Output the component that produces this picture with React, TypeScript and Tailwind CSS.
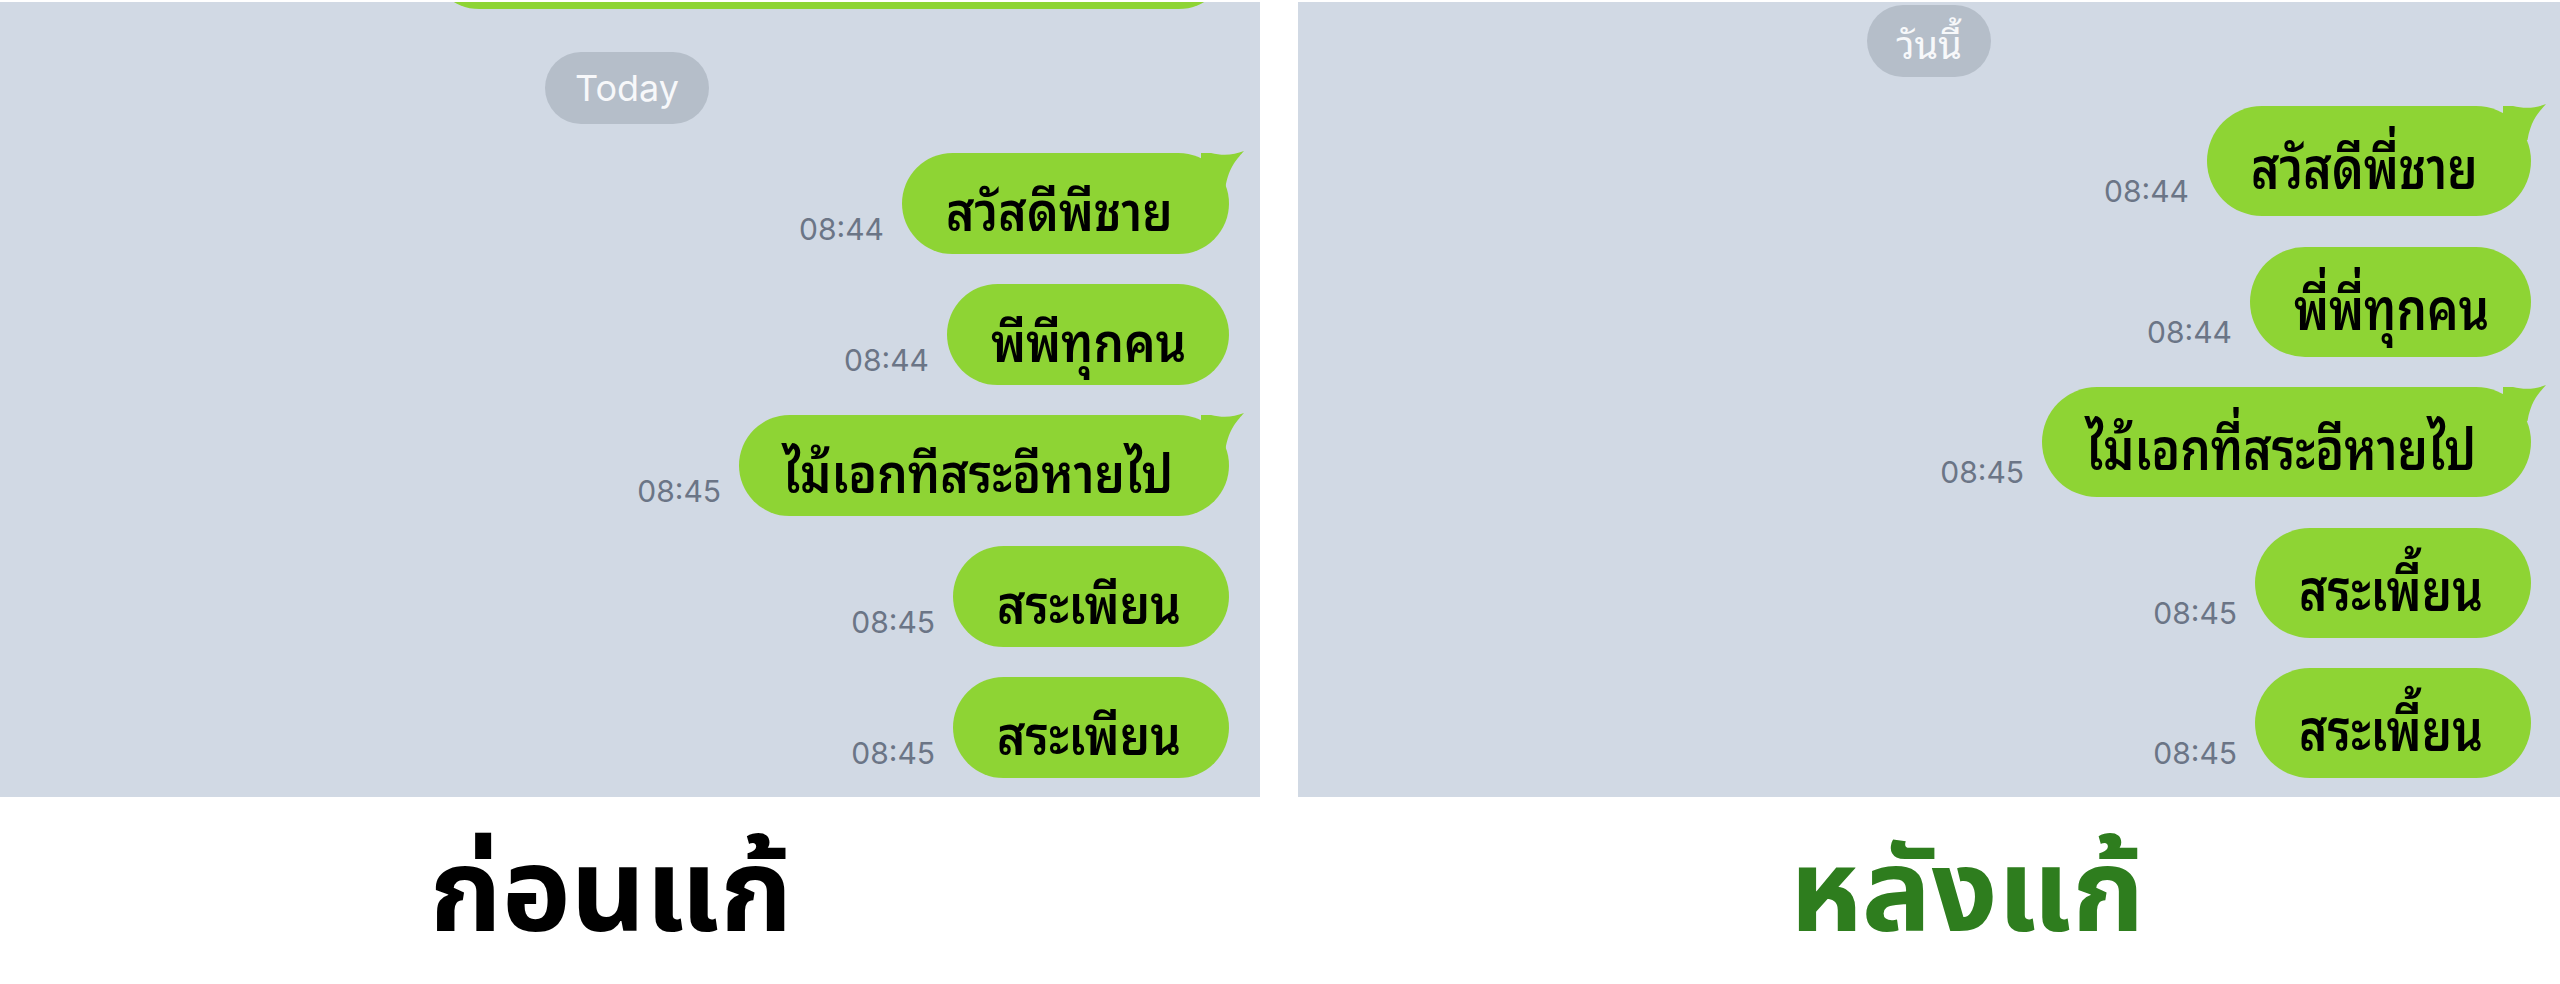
const thaiLooped = 'font-["Noto_Sans_Thai_Looped","Noto_Sans_Thai",sans-serif]';

type Msg = { time: string; text: string; tail?: boolean; width: string };

const before: Msg[] = [
  { time: '08:44', text: 'สวัสดีพีชาย', tail: true, width: 'w-[327px]' },
  { time: '08:44', text: 'พีพีทุกคน', width: 'w-[282px]' },
  { time: '08:45', text: 'ไม้เอกทีสระอีหายไป', tail: true, width: 'w-[490px]' },
  { time: '08:45', text: 'สระเพียน', width: 'w-[276px]' },
  { time: '08:45', text: 'สระเพียน', width: 'w-[276px]' },
];

const after: Msg[] = [
  { time: '08:44', text: 'สวัสดีพี่ชาย', tail: true, width: 'w-[324px]' },
  { time: '08:44', text: 'พี่พี่ทุกคน', width: 'w-[281px]' },
  { time: '08:45', text: 'ไม้เอกที่สระอีหายไป', tail: true, width: 'w-[489px]' },
  { time: '08:45', text: 'สระเพี้ยน', width: 'w-[276px]' },
  { time: '08:45', text: 'สระเพี้ยน', width: 'w-[276px]' },
];

function Tail() {
  return (
    <svg
      className="absolute -top-[2px] -right-[15px] h-[36px] w-[43px]"
      viewBox="0 0 43 36"
      aria-hidden="true"
    >
      <path d="M0 2 H10 C22 5 33 4 43 0 C37 7 28 15 24.5 36 L0 36 Z" fill="#8ed434" />
    </svg>
  );
}

function Bubble({ msg, tall }: { msg: Msg; tall?: boolean }) {
  return (
    <div className="flex items-end justify-end gap-[18px]">
      <span className="mb-[10px] font-['Inter',sans-serif] text-[30px] leading-none text-[#6b7586]">
        {msg.time}
      </span>
      <div
        className={`relative flex items-center rounded-full bg-[#8ed434] pl-[44px] pt-[6px] ${msg.width} ${
          tall ? 'h-[110px]' : 'h-[101px]'
        }`}
      >
        {msg.tail && <Tail />}
        <span
          className={`${thaiLooped} whitespace-nowrap text-[48px] font-semibold leading-none text-black ${
            tall ? 'scale-y-[1.2]' : 'scale-y-[1.12]'
          }`}
        >
          {msg.text}
        </span>
      </div>
    </div>
  );
}

export default function App() {
  return (
    <div className="h-[984px] w-[2560px] overflow-hidden bg-white">
      <div className="flex h-[797px] gap-[38px] pt-[2px]">
        {/* before */}
        <div className="flex h-[795px] w-[1260px] flex-col overflow-hidden bg-[#d1d9e4]">
          <div className="flex justify-end pr-[31px]">
            <div className="-mt-[94px] h-[101px] w-[800px] rounded-full bg-[#8ed434]" />
          </div>
          <div className="mt-[43px] flex justify-center pr-[6px]">
            <div className="flex h-[72px] w-[164px] items-center justify-center rounded-full bg-[#b5bec9] font-['Inter',sans-serif] text-[36px] text-[#f7f8fa]">
              Today
            </div>
          </div>
          <div className="mt-[29px] flex flex-col gap-[30px] pr-[31px]">
            {before.map((m, i) => (
              <Bubble key={i} msg={m} />
            ))}
          </div>
        </div>

        {/* after */}
        <div className="flex h-[795px] flex-1 flex-col overflow-hidden bg-[#d1d9e4]">
          <div className="mt-[3px] flex justify-center">
            <div
              className={`flex h-[72px] w-[124px] items-center justify-center rounded-full bg-[#b5bec9] ${thaiLooped} text-[38px] text-[#f7f8fa]`}
            >
              วันนี้
            </div>
          </div>
          <div className="mt-[29px] flex flex-col gap-[30.5px] pr-[29px]">
            {after.map((m, i) => (
              <Bubble key={i} msg={m} tall />
            ))}
          </div>
        </div>
      </div>

      <div className="flex">
        <div className="flex w-[1260px] justify-center pr-[38px]">
          <h2 className="mt-[41px] font-['Noto_Sans_Thai',sans-serif] text-[116px] font-bold leading-none text-black">
            ก่อนแก้
          </h2>
        </div>
        <div className="flex flex-1 justify-center pl-[114px]">
          <h2 className="mt-[41px] font-['Noto_Sans_Thai',sans-serif] text-[116px] font-bold leading-none text-[#2e7d1e]">
            หลังแก้
          </h2>
        </div>
      </div>
    </div>
  );
}
